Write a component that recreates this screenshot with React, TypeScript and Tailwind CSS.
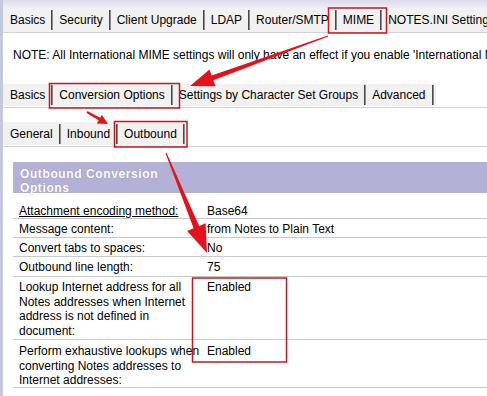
import React from "react";

type P = [number, number];

function arrowPoints(t: P, h: P, w0: number, w1: number, hl: number, hw: number): string {
  const dx = h[0] - t[0];
  const dy = h[1] - t[1];
  const L = Math.hypot(dx, dy);
  const ux = dx / L;
  const uy = dy / L;
  const nx = -uy;
  const ny = ux;
  const bx = h[0] - ux * hl;
  const by = h[1] - uy * hl;
  const pts: P[] = [
    [t[0] + (nx * w0) / 2, t[1] + (ny * w0) / 2],
    [bx + (nx * w1) / 2, by + (ny * w1) / 2],
    [bx + (nx * hw) / 2, by + (ny * hw) / 2],
    [h[0], h[1]],
    [bx - (nx * hw) / 2, by - (ny * hw) / 2],
    [bx - (nx * w1) / 2, by - (ny * w1) / 2],
    [t[0] - (nx * w0) / 2, t[1] - (ny * w0) / 2],
  ];
  return pts.map((p) => `${p[0].toFixed(1)},${p[1].toFixed(1)}`).join(" ");
}

function Sep() {
  return <span className="inline-block w-[2px] h-[20px] bg-[#4a4a4a] border-r border-[#8a8a8a] shrink-0" />;
}

function Tabs({ items, trailing }: { items: string[]; trailing?: boolean }) {
  return (
    <>
      {items.map((t, i) => (
        <React.Fragment key={t}>
          {i > 0 && <Sep />}
          <span className={i === 0 ? "pr-[6px]" : "px-[6px]"}>{t}</span>
        </React.Fragment>
      ))}
      {trailing && <Sep />}
    </>
  );
}

const rows: { label: React.ReactNode; value: string; cls: string }[] = [
  {
    label: <span className="underline">Attachment encoding method:</span>,
    value: "Base64",
    cls: "h-[26px] pt-[11px]",
  },
  { label: "Message content:", value: "from Notes to Plain Text", cls: "h-[19px] pt-[3px]" },
  { label: "Convert tabs to spaces:", value: "No", cls: "h-[19px] pt-[3px]" },
  { label: "Outbound line length:", value: "75", cls: "h-[20px] pt-[3px]" },
  {
    label: "Lookup Internet address for all Notes addresses when Internet address is not defined in document:",
    value: "Enabled",
    cls: "h-[63px] pt-[3px]",
  },
  {
    label: "Perform exhaustive lookups when converting Notes addresses to Internet addresses:",
    value: "Enabled",
    cls: "h-[48px] pt-[4px]",
  },
];

export default function App() {
  return (
    <div className="relative w-[487px] h-[396px] overflow-hidden bg-white flex font-['Liberation_Sans',Arial,sans-serif] text-[12px] leading-[14px] text-black">
      <div className="w-[3px] shrink-0 bg-[#c3c9dc]" />
      <div className="flex-1 min-w-0 flex flex-col">
        <div className="h-[8px] bg-gradient-to-b from-[#dcd9ec] to-[#eeedf5]" />
        <div className="h-[25px] bg-[#f1f1f1] border-b border-[#d2d2d2] flex items-center pl-[7px] whitespace-nowrap">
          <Tabs items={["Basics", "Security", "Client Upgrade", "LDAP", "Router/SMTP", "MIME", "NOTES.INI Settings"]} />
        </div>
        <div className="mt-[15px] pl-[10px] whitespace-nowrap">
          NOTE: All International MIME settings will only have an effect if you enable 'International MIME settings for this document'
        </div>
        <div className="mt-[22px] border-b border-[#d2d2d2] pb-[1px]">
          <div className="inline-flex items-center h-[22px] bg-[#f1f1f1] pl-[7px] pr-[2px] whitespace-nowrap">
            <Tabs items={["Basics", "Conversion Options", "Settings by Character Set Groups", "Advanced"]} trailing />
          </div>
        </div>
        <div className="mt-[14px] border-b border-[#d2d2d2] pb-[1px]">
          <div className="inline-flex items-center h-[23px] bg-[#f1f1f1] pl-[7px] pr-[2px] whitespace-nowrap">
            <Tabs items={["General", "Inbound", "Outbound"]} trailing />
          </div>
        </div>
        <div className="mt-[15px] ml-[10px]">
          <div className="h-[31px] bg-[#b4b1d6] pl-[7px] pt-[5px] font-bold text-white tracking-[0.6px] leading-[14px] [text-shadow:0_0_1px_#8581b3]">
            Outbound Conversion
            <br />
            Options
          </div>
          {rows.map((r, i) => (
            <div key={i} className={`flex border-b border-[#c9c9c9] ${r.cls}`}>
              <div className="w-[192px] shrink-0 pl-[6px] leading-[14.5px]">{r.label}</div>
              <div className="pl-[2px] leading-[14.5px]">{r.value}</div>
            </div>
          ))}
        </div>
      </div>

      <svg className="absolute inset-0 pointer-events-none" width="487" height="396" viewBox="0 0 487 396">
        <g fill="none" stroke="#c9161f" strokeWidth="1.5">
          <rect x="328.5" y="8" width="58" height="25" />
          <rect x="49.5" y="83.5" width="130" height="24.5" />
          <rect x="114.5" y="121.5" width="72.5" height="25.5" />
          <rect x="192.5" y="278" width="94" height="84" />
        </g>
        <g fill="#e3121b">
          <polygon points={arrowPoints([328, 36], [190, 86], 1, 5, 24, 18)} />
          <polygon points={arrowPoints([87, 112], [108, 124], 2, 3, 10, 10)} />
          <polygon points={arrowPoints([166, 153], [207, 253], 1, 6, 28, 20)} />
        </g>
      </svg>
    </div>
  );
}
